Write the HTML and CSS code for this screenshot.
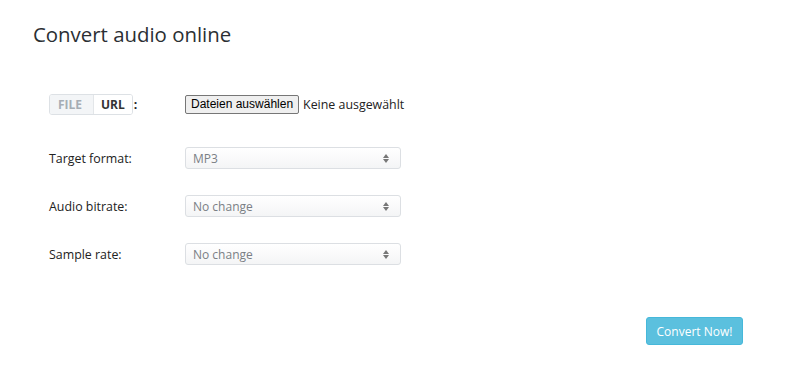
FILE: index.html
```html
<!DOCTYPE html>
<html lang="de">
<head>
  <meta charset="UTF-8" />
  <title>Convert audio online</title>
  <link rel="stylesheet" href="styles.css">
</head>
<body>
  <div class="page">
    <h1>Convert audio online</h1>

    <form class="form">
      <div class="row">
        <div class="label">
          <span class="toggle"><span class="seg off">FILE</span><span class="seg on">URL</span></span>
          <span class="colon">:</span>
        </div>
        <div class="file">
          <button type="button" class="file-btn">Dateien auswählen</button>
          <span class="file-name">Keine ausgewählt</span>
        </div>
      </div>

      <div class="row">
        <div class="label">Target format:</div>
        <div class="select"><span>MP3</span><span class="arrows"></span></div>
      </div>

      <div class="row">
        <div class="label">Audio bitrate:</div>
        <div class="select"><span>No change</span><span class="arrows"></span></div>
      </div>

      <div class="row">
        <div class="label">Sample rate:</div>
        <div class="select"><span>No change</span><span class="arrows"></span></div>
      </div>

      <div class="actions">
        <button type="button" class="convert">Convert Now!</button>
      </div>
    </form>
  </div>
</body>
</html>
```

FILE: styles.css
```css
body {
  margin: 0;
  background: #fff;
  font-family: "Open Sans", sans-serif;
  color: #333;
}

.page {
  padding: 20px 0 0 33px;
  width: 710px;
}

h1 {
  margin: 0;
  font-size: 20.4px;
  font-weight: 400;
  line-height: 28px;
  color: #2b2f33;
}

.form {
  padding: 45px 0 0 16px;
}

.row {
  display: flex;
  align-items: center;
  height: 22px;
  margin-bottom: 26px;
}

.row:first-child {
  margin-bottom: 32px;
}

.label {
  width: 136px;
  font-size: 12.4px;
  color: #222;
  display: flex;
  align-items: center;
}

.toggle {
  display: inline-flex;
  border: 1px solid #dde1e5;
  border-radius: 3px;
  height: 19px;
  font-size: 12px;
  font-weight: 700;
  line-height: 19px;
  overflow: hidden;
}

.seg {
  padding: 0 7px;
}

.seg.off {
  width: 28px;
  padding: 0 7px 0 8px;
  background: #f3f5f7;
  color: #a6adb4;
  border-right: 1px solid #e3e6e9;
}

.seg.on {
  background: #fff;
  color: #333;
}

.colon {
  margin-left: 1px;
  font-weight: 700;
}

.file {
  display: flex;
  align-items: center;
}

.file-btn {
  font-family: "Liberation Sans", Arial, sans-serif;
  font-size: 12px;
  height: 19px;
  padding: 0 5px;
  background: #efefef;
  border: 1px solid #767676;
  border-radius: 2px;
  color: #000;
  line-height: 17px;
}

.file-name {
  margin-left: 4px;
  font-size: 12.4px;
  color: #222;
}

.select {
  box-sizing: border-box;
  width: 216px;
  height: 22px;
  border: 1px solid #dcdfe3;
  border-radius: 3px;
  background: linear-gradient(#fff, #f4f5f6);
  display: flex;
  align-items: center;
  justify-content: space-between;
  padding: 0 11px 0 7px;
  font-size: 12px;
  color: #7a7f85;
}

.arrows {
  position: relative;
  width: 6px;
  height: 9px;
}

.arrows::before,
.arrows::after {
  content: "";
  position: absolute;
  left: 0;
  border-left: 3px solid transparent;
  border-right: 3px solid transparent;
}

.arrows::before {
  top: 0;
  border-bottom: 4px solid #777;
}

.arrows::after {
  bottom: 0;
  border-top: 4px solid #777;
}

.actions {
  display: flex;
  justify-content: flex-end;
  padding-top: 26px;
}

.convert {
  font-family: "Open Sans", sans-serif;
  font-size: 12px;
  color: #fff;
  background: #5bc0de;
  border: 1px solid #46b8da;
  border-radius: 3px;
  width: 97px;
  height: 28px;
  cursor: pointer;
}
```
